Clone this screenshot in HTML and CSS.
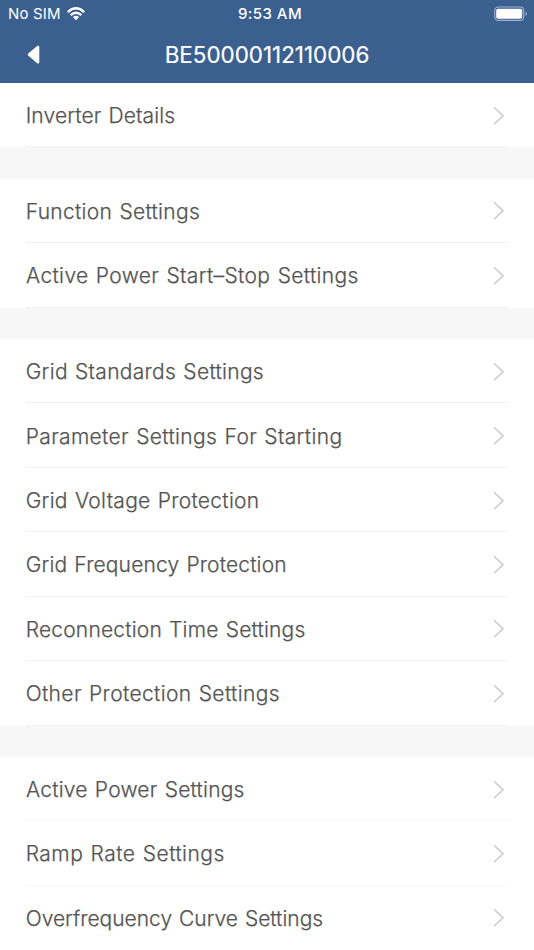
FILE: index.html
```html
<!DOCTYPE html>
<html lang="en">
<head>
<meta charset="utf-8">
<title>BE50000112110006</title>
<link rel="stylesheet" href="styles.css">
</head>
<body>
<svg class="defs" width="0" height="0"><symbol id="chevron" viewBox="0 0 12 20"><path d="M1 1.2 10 9.7 1 18.2" fill="none" stroke="#c9c9c9" stroke-width="1.5"/></symbol></svg>
<header class="header">
  <div class="status">
    <div class="carrier"><span>No SIM</span>
      <svg class="wifi" viewBox="0 0 18 14" width="18" height="14"><g fill="none" stroke="#fff" stroke-width="2.4"><path d="M.8 5.1Q9-2.5 17.2 5.1"/><path d="M3.7 8.2Q9 3.3 14.3 8.2"/></g><path d="M5.9 10.1Q9 7.6 12.1 10.1L9 13.2Z" fill="#fff"/></svg>
    </div>
    <span class="time">9:53 AM</span>
    <svg class="battery" viewBox="0 0 34 16" width="34" height="16"><rect x=".7" y="1" width="29" height="13.4" rx="3.5" fill="none" stroke="#a2b4ce" stroke-width="1.1"/><rect x="2.2" y="2.7" width="26" height="10" rx="1.8" fill="#fff"/><path d="M31.5 5.4Q33 6.2 33 7.7T31.5 10Z" fill="#a2b4ce"/></svg>
  </div>
  <nav class="nav">
    <svg class="back" viewBox="0 0 14 20" width="14" height="20"><path d="M2 9.6 11 2V17.2Z" fill="#fff" stroke="#fff" stroke-width="2.6" stroke-linejoin="round"/></svg>
    <h1 class="title">BE50000112110006</h1>
  </nav>
</header>
<main class="list">
  <section class="group">
    <a class="row"><span class="label details">Inverter Details</span><svg class="chevron"><use href="#chevron"/></svg></a>
  </section>
  <section class="group">
    <a class="row"><span class="label function">Function Settings</span><svg class="chevron"><use href="#chevron"/></svg></a>
    <a class="row"><span class="label start-stop">Active Power Start–Stop Settings</span><svg class="chevron"><use href="#chevron"/></svg></a>
  </section>
  <section class="group">
    <a class="row"><span class="label standards">Grid Standards Settings</span><svg class="chevron"><use href="#chevron"/></svg></a>
    <a class="row"><span class="label starting">Parameter Settings For Starting</span><svg class="chevron"><use href="#chevron"/></svg></a>
    <a class="row"><span class="label voltage">Grid Voltage Protection</span><svg class="chevron"><use href="#chevron"/></svg></a>
    <a class="row"><span class="label frequency">Grid Frequency Protection</span><svg class="chevron"><use href="#chevron"/></svg></a>
    <a class="row"><span class="label reconnection">Reconnection Time Settings</span><svg class="chevron"><use href="#chevron"/></svg></a>
    <a class="row"><span class="label other">Other Protection Settings</span><svg class="chevron"><use href="#chevron"/></svg></a>
  </section>
  <section class="group light">
    <a class="row"><span class="label active-power">Active Power Settings</span><svg class="chevron"><use href="#chevron"/></svg></a>
    <a class="row"><span class="label ramp">Ramp Rate Settings</span><svg class="chevron"><use href="#chevron"/></svg></a>
    <a class="row"><span class="label curve">Overfrequency Curve Settings</span><svg class="chevron"><use href="#chevron"/></svg></a>
  </section>
</main>
</body>
</html>
```
FILE: styles.css
```css
* { box-sizing: border-box; }
body {
  margin: 0;
  height: 950px;
  overflow: hidden;
  background: #f7f7f7;
  font-family: Inter, "Liberation Sans", sans-serif;
}
.defs { display: block; }
.header {
  height: 83px;
  background: #3b5f8f;
  color: #fff;
}
.status {
  display: grid;
  grid-template-columns: 1fr auto 1fr;
  align-items: center;
  height: 27px;
  padding: 0 6px 0 8px;
  font-size: 15px;
  line-height: 28px;
}
.carrier { display: flex; align-items: center; gap: 6px; letter-spacing: .15px; }
.wifi { margin-top: -1px; }
.time { margin-left: 4px; font-weight: 500; letter-spacing: .45px; }
.battery { justify-self: end; }
.nav {
  display: grid;
  grid-template-columns: 80px 1fr 80px;
  align-items: center;
  height: 55px;
}
.back { margin-left: 27px; }
.title {
  margin: 0;
  text-align: center;
  font-size: 22.4px;
  font-weight: 400;
  letter-spacing: 0;
  line-height: 54px;
  -webkit-text-stroke: .2px #fff;
}
.list { display: flex; flex-direction: column; gap: 31.3px; }
.group { padding-left: 26px; background: #fff; }
.row {
  display: flex;
  align-items: center;
  justify-content: space-between;
  height: 64.45px;
  margin-right: 26px;
  padding: 2px 3px 0 0;
  border-bottom: 1px solid #f1f1f1;
}
.light .row { border-color: #f7f7f7; }
.light .row:last-child { border-color: transparent; }
.chevron { width: 12px; height: 20px; }
.label {
  margin-left: -.3px;
  padding-top: 1px;
  color: #545454;
  font-size: 21px;
  font-weight: 300;
  line-height: 32px;
  white-space: nowrap;
  word-spacing: 1px;
  -webkit-text-stroke: .25px #545454;
}
.details { letter-spacing: .13px; }
.function { letter-spacing: .3px; }
.start-stop { margin-left: 0; letter-spacing: .36px; }
.standards { letter-spacing: .3px; }
.starting { letter-spacing: .35px; }
.voltage { letter-spacing: .29px; }
.frequency { letter-spacing: .16px; }
.reconnection { letter-spacing: .19px; }
.other { letter-spacing: .36px; }
.active-power { margin-left: 0; letter-spacing: .22px; }
.ramp { letter-spacing: .46px; }
.curve { letter-spacing: 0; }
```
